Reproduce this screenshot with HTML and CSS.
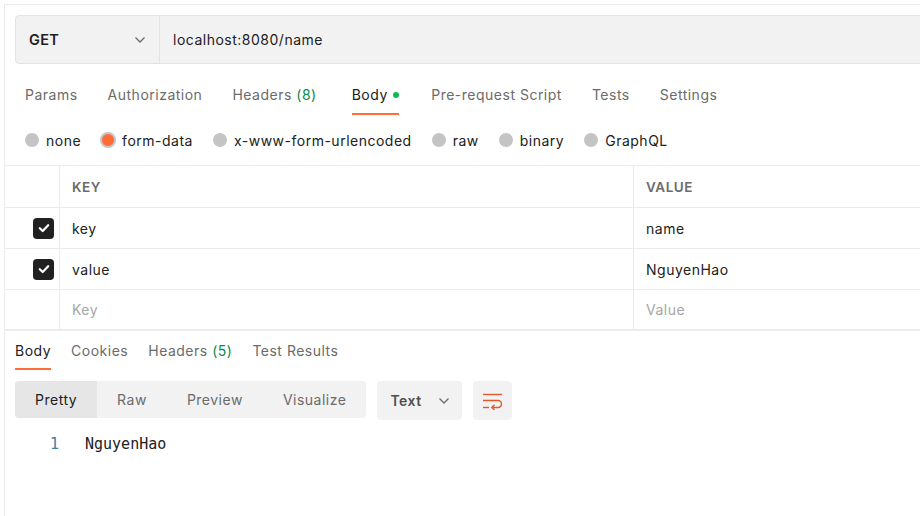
FILE: index.html
```html
<!DOCTYPE html>
<html>
<head>
<meta charset="utf-8">
<link rel="stylesheet" href="styles.css">
</head>
<body>
<div class="app">
  <div class="pane">
    <div class="urlbar">
      <div class="method">
        <span class="method-name">GET</span>
        <svg class="chev" width="12" height="8" viewBox="0 0 12 8"><path d="M1.5 1.5 L6 6 L10.5 1.5" fill="none" stroke="#6b6b6b" stroke-width="1.3"/></svg>
      </div>
      <div class="url">localhost:8080/name</div>
    </div>

    <div class="tabs">
      <div class="tab">Params</div>
      <div class="tab">Authorization</div>
      <div class="tab">Headers <span class="count">(8)</span></div>
      <div class="tab active">Body <span class="dot"></span></div>
      <div class="tab">Pre-request Script</div>
      <div class="tab">Tests</div>
      <div class="tab">Settings</div>
    </div>

    <div class="radios">
      <div class="radio"><span class="circle"></span>none</div>
      <div class="radio"><span class="circle on"></span>form-data</div>
      <div class="radio"><span class="circle"></span>x-www-form-urlencoded</div>
      <div class="radio"><span class="circle"></span>raw</div>
      <div class="radio"><span class="circle"></span>binary</div>
      <div class="radio"><span class="circle"></span>GraphQL</div>
    </div>

    <div class="table">
      <div class="cell check head"></div>
      <div class="cell head">KEY</div>
      <div class="cell head last">VALUE</div>

      <div class="cell check"><span class="box"><svg width="14" height="14" viewBox="0 0 14 14"><path d="M2.8 7.2 L5.7 10 L11.2 4.2" fill="none" stroke="#fff" stroke-width="2.2" stroke-linecap="round" stroke-linejoin="round"/></svg></span></div>
      <div class="cell">key</div>
      <div class="cell last">name</div>

      <div class="cell check"><span class="box"><svg width="14" height="14" viewBox="0 0 14 14"><path d="M2.8 7.2 L5.7 10 L11.2 4.2" fill="none" stroke="#fff" stroke-width="2.2" stroke-linecap="round" stroke-linejoin="round"/></svg></span></div>
      <div class="cell">value</div>
      <div class="cell last">NguyenHao</div>

      <div class="cell check bottom"></div>
      <div class="cell ph bottom">Key</div>
      <div class="cell ph bottom last">Value</div>
    </div>

    <div class="rtabs">
      <div class="rtab active">Body</div>
      <div class="rtab">Cookies</div>
      <div class="rtab">Headers <span class="count">(5)</span></div>
      <div class="rtab">Test Results</div>
    </div>

    <div class="toolbar">
      <div class="seg">
        <div class="seg-item sel">Pretty</div>
        <div class="seg-item">Raw</div>
        <div class="seg-item">Preview</div>
        <div class="seg-item">Visualize</div>
      </div>
      <div class="dropdown">
        <span>Text</span>
        <svg width="12" height="8" viewBox="0 0 12 8"><path d="M1.5 1.5 L6 6 L10.5 1.5" fill="none" stroke="#6b6b6b" stroke-width="1.3"/></svg>
      </div>
      <div class="wrapbtn">
        <svg width="22" height="18" viewBox="0 0 22 18">
          <path d="M1 2.5 H20" stroke="#e05a2b" stroke-width="1.4" fill="none"/>
          <path d="M1 8.5 H16 a3.5 3.5 0 0 1 0 7 H10" stroke="#e05a2b" stroke-width="1.4" fill="none"/>
          <path d="M12.5 12.8 L9.8 15.5 L12.5 18" stroke="#e05a2b" stroke-width="1.4" fill="none"/>
          <path d="M1 15.5 H7" stroke="#e05a2b" stroke-width="1.4" fill="none"/>
        </svg>
      </div>
    </div>

    <div class="code">
      <span class="ln">1</span>
      <span class="src">NguyenHao</span>
    </div>
  </div>
</div>
</body>
</html>
```

FILE: styles.css
```css
* { box-sizing: border-box; }
html, body { margin: 0; padding: 0; background: #fff; }
body {
  font-family: Inter, "Noto Sans", "Liberation Sans", sans-serif;
  font-size: 14px;
  letter-spacing: 0.5px;
  color: #212121;
  width: 920px;
  height: 516px;
  overflow: hidden;
}
.app { padding-top: 4px; }
.pane {
  margin-left: 4px;
  border-top: 1px solid #ebebeb;
  border-left: 1px solid #ebebeb;
  height: 512px;
  overflow: hidden;
}

/* URL bar */
.urlbar {
  margin: 10px -20px 0 10px;
  height: 49px;
  display: flex;
  background: #f2f2f2;
  border: 1px solid #e3e3e3;
  border-radius: 4px;
}
.method {
  width: 144px;
  flex: none;
  display: flex;
  align-items: center;
  justify-content: space-between;
  padding: 0 13px 0 13px;
  border-right: 1px solid #e3e3e3;
}
.method-name { font-weight: 600; font-size: 14.5px; color: #212121; letter-spacing: 0.3px; }
.url { display: flex; align-items: center; padding-left: 13px; font-size: 14px; color: #212121; }

/* request tabs */
.tabs {
  display: flex;
  padding-left: 20px;
  gap: 30px;
  height: 51px;
}
.tab {
  padding-top: 21px;
  line-height: 20px;
  height: 51px;
  color: #6b6b6b;
  border-bottom: 2px solid transparent;
  white-space: nowrap;
}
.tab.active { color: #212121; border-bottom-color: #ff6c37; margin-left: 5px; margin-right: 2px; }
.count { color: #0b8a4e; }
.dot {
  display: inline-block;
  width: 6px; height: 6px;
  border-radius: 50%;
  background: #0cbb52;
  vertical-align: middle;
  margin-left: 1px;
  position: relative;
  top: -1px;
}

/* radios */
.radios {
  display: flex;
  align-items: center;
  height: 50px;
  padding-left: 20px;
  gap: 20px;
  color: #212121;
}
.radio { display: flex; align-items: center; gap: 7px; white-space: nowrap; }
.circle {
  width: 14px; height: 14px;
  border-radius: 50%;
  background: #c4c4c4;
  display: inline-block;
}
.circle.on {
  width: 16px; height: 16px;
  background: #ff6c37;
  border: 2px solid #c4c4c4;
  margin-left: -1px;
  margin-right: -1px;
}

/* table */
.table {
  display: grid;
  grid-template-columns: 55px 574px 1fr;
  border-top: 1px solid #ebebeb;
}
.cell {
  height: 41px;
  border-bottom: 1px solid #ebebeb;
  border-right: 1px solid #ebebeb;
  display: flex;
  align-items: center;
  padding-left: 12px;
  color: #212121;
}
.cell.last { border-right: none; }
.cell.head { height: 42px; font-weight: 600; font-size: 13.5px; color: #6b6b6b; }
.cell.check { padding-left: 28px; }
.cell.bottom { height: 41px; border-bottom: 2px solid #ececec; }
.cell.ph { color: #a6a6a6; }
.box {
  width: 21px; height: 21px;
  border-radius: 4px;
  background: #212121;
  display: flex;
  align-items: center;
  justify-content: center;
}

/* response tabs */
.rtabs {
  display: flex;
  padding-left: 10px;
  gap: 20px;
  height: 39px;
}
.rtab {
  padding-top: 10px;
  line-height: 20px;
  height: 39px;
  color: #6b6b6b;
  border-bottom: 2px solid transparent;
  white-space: nowrap;
}
.rtab.active { color: #212121; border-bottom-color: #ff6c37; }

/* toolbar */
.toolbar {
  display: flex;
  align-items: flex-start;
  gap: 11px;
  margin-top: 11px;
  padding-left: 10px;
}
.seg {
  display: flex;
  height: 37px;
  background: #f2f2f2;
  border-radius: 4px;
  overflow: hidden;
}
.seg-item {
  display: flex;
  align-items: center;
  padding: 0 20px;
  color: #6b6b6b;
  font-size: 14px;
}
.seg-item.sel { background: #e6e6e6; color: #212121; }
.dropdown {
  height: 39px;
  width: 85px;
  background: #f2f2f2;
  border-radius: 4px;
  display: flex;
  align-items: center;
  padding-left: 13px;
  gap: 16px;
  font-weight: 600;
  color: #505050;
}
.wrapbtn {
  width: 39px;
  height: 39px;
  background: #f2f2f2;
  border-radius: 4px;
  display: flex;
  align-items: center;
  justify-content: center;
}

/* code */
.code {
  margin-top: 14px;
  display: flex;
  align-items: center;
  height: 20px;
  font-family: "DejaVu Sans Mono", "Liberation Mono", monospace;
  font-size: 15px;
  letter-spacing: 0;
}
.ln { width: 54px; text-align: right; color: #3d7fa8; }
.src { margin-left: 26px; color: #212121; }
```
